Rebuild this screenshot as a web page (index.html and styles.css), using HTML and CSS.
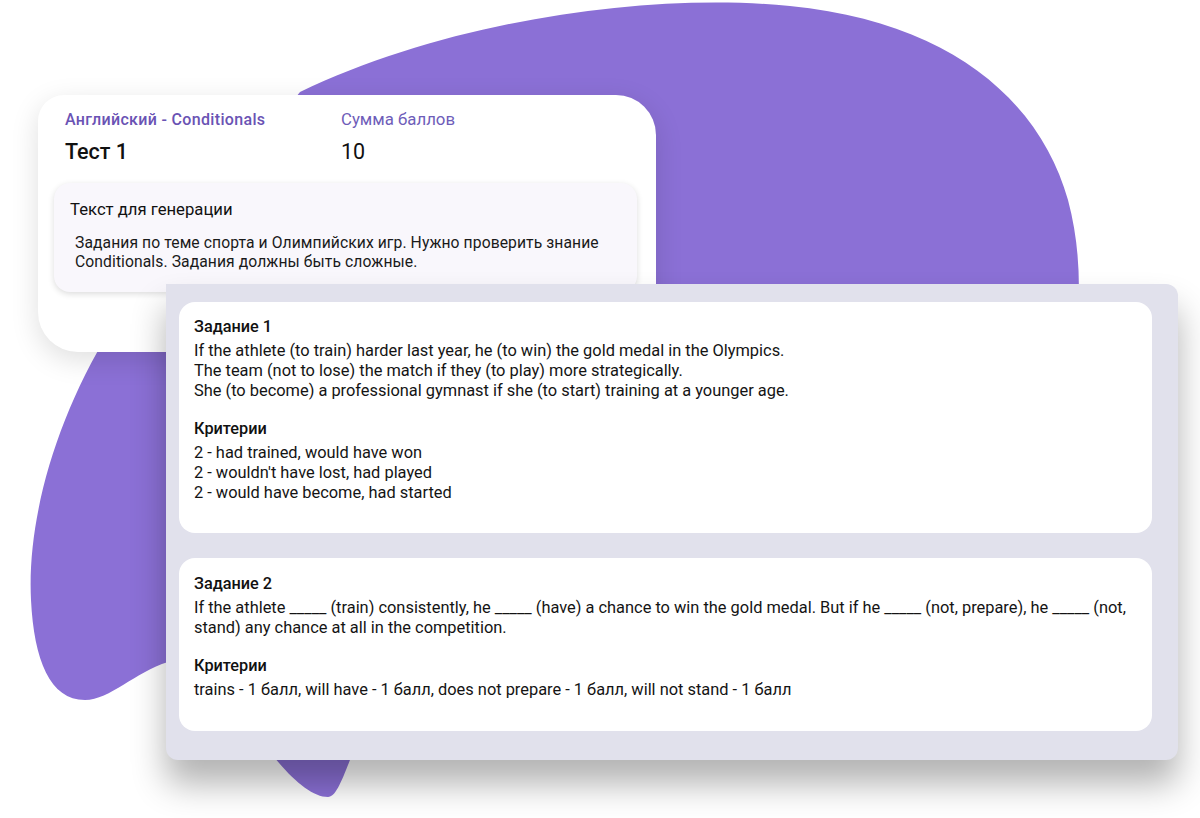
FILE: index.html
```html
<!DOCTYPE html>
<html lang="ru">
<head>
<meta charset="utf-8">
<title>Тест 1</title>
<link rel="stylesheet" href="styles.css">
</head>
<body>
<div class="stage">
  <svg class="blob" width="1200" height="818" viewBox="0 0 1200 818" aria-hidden="true">
    <path d="M 300 92 C 450 20 650 -8 790 6 C 950 22 1040 100 1068 200 C 1092 290 1072 380 1050 480 L 900 740 L 352 755 C 342 780 336 797 328 797 C 312 797 292 780 270 752 L 168 662 C 135 672 110 700 85 700 C 50 700 34 660 31 600 C 27 520 55 420 110 330 Z"/>
  </svg>

  <section class="card-test">
    <div class="test-head">
      <div class="head-col">
        <div class="subject">Английский - Conditionals</div>
        <div class="title">Тест 1</div>
      </div>
      <div class="head-col">
        <div class="label">Сумма баллов</div>
        <div class="score">10</div>
      </div>
    </div>
    <div class="prompt-box">
      <div class="prompt-title">Текст для генерации</div>
      <p class="prompt-text">Задания по теме спорта и Олимпийских игр. Нужно проверить знание Conditionals. Задания должны быть сложные.</p>
    </div>
  </section>

  <section class="card-tasks">
    <article class="task task-1">
      <h3 class="task-title">Задание 1</h3>
      <p class="task-text">If the athlete (to train) harder last year, he (to win) the gold medal in the Olympics.<br>The team (not to lose) the match if they (to play) more strategically.<br>She (to become) a professional gymnast if she (to start) training at a younger age.</p>
      <h3 class="task-title crit">Критерии</h3>
      <p class="task-text">2 - had trained, would have won<br>2 - wouldn't have lost, had played<br>2 - would have become, had started</p>
    </article>
    <article class="task task-2">
      <h3 class="task-title">Задание 2</h3>
      <p class="task-text">If the athlete _____ (train) consistently, he _____ (have) a chance to win the gold medal. But if he _____ (not, prepare), he _____ (not, stand) any chance at all in the competition.</p>
      <h3 class="task-title crit">Критерии</h3>
      <p class="task-text">trains - 1 балл, will have - 1 балл, does not prepare - 1 балл, will not stand - 1 балл</p>
    </article>
  </section>
</div>
</body>
</html>
```

FILE: styles.css
```css
* { box-sizing: border-box; }
html, body { margin: 0; padding: 0; background: #ffffff; }
body {
  font-family: Roboto, "Noto Sans", sans-serif;
  color: #111111;
}
.stage {
  position: relative;
  width: 1200px;
  height: 818px;
  overflow: hidden;
  padding-top: 95px;
}
.blob {
  position: absolute;
  left: 0;
  top: 0;
}
.blob path { fill: #8b70d6; }

.card-test {
  position: relative;
  margin-left: 38px;
  width: 618px;
  height: 257px;
  background: #ffffff;
  border-radius: 26px 40px 40px 40px;
  box-shadow: 0 8px 28px rgba(0, 0, 0, 0.13);
  padding: 14px 19px 0 16px;
}
.test-head {
  display: flex;
  padding-left: 11px;
}
.head-col { display: flex; flex-direction: column; }
.head-col:first-child { width: 276px; }
.subject {
  font-size: 16px;
  font-weight: 500;
  letter-spacing: 0.33px;
  color: #6a53b4;
  line-height: 22px;
}
.label {
  font-size: 16.8px;
  color: #6e5db9;
  line-height: 21px;
}
.title, .score {
  margin-top: 8px;
  font-size: 21.5px;
  line-height: 26px;
  color: #111;
}
.title { font-weight: 500; }
.score { margin-top: 9px; }
.prompt-box {
  margin-top: 18px;
  background: #f9f7fc;
  border-radius: 16px;
  box-shadow: 0 2px 6px rgba(0, 0, 0, 0.14);
  padding: 17px 8px 16px 16px;
  height: 109px;
}
.prompt-title {
  font-size: 16.7px;
  line-height: 20px;
}
.prompt-text {
  margin: 13px 0 0 5px;
  font-size: 15.7px;
  letter-spacing: 0.08px;
  line-height: 19px;
  color: #1a1a1a;
}

.card-tasks {
  position: relative;
  margin-top: -68px;
  margin-left: 166px;
  width: 1012px;
  height: 476px;
  background: #e1e1ec;
  border-radius: 0 12px 12px 12px;
  box-shadow: 0 24px 34px rgba(0, 0, 0, 0.3);
  padding: 18px 26px 0 13px;
  display: flex;
  flex-direction: column;
  gap: 25px;
}
.task {
  background: #ffffff;
  border-radius: 16px;
  padding: 14px 15px 0 15px;
}
.task-1 { height: 231px; }
.task-2 { height: 173px; padding-top: 15px; }
.task-title {
  margin: 0;
  font-size: 16.3px;
  font-weight: 500;
  line-height: 22px;
}
.task-title.crit { margin-top: 17px; }
.task-text {
  margin: 3px 0 0;
  font-size: 16.4px;
  line-height: 20px;
  color: #141414;
}
```
